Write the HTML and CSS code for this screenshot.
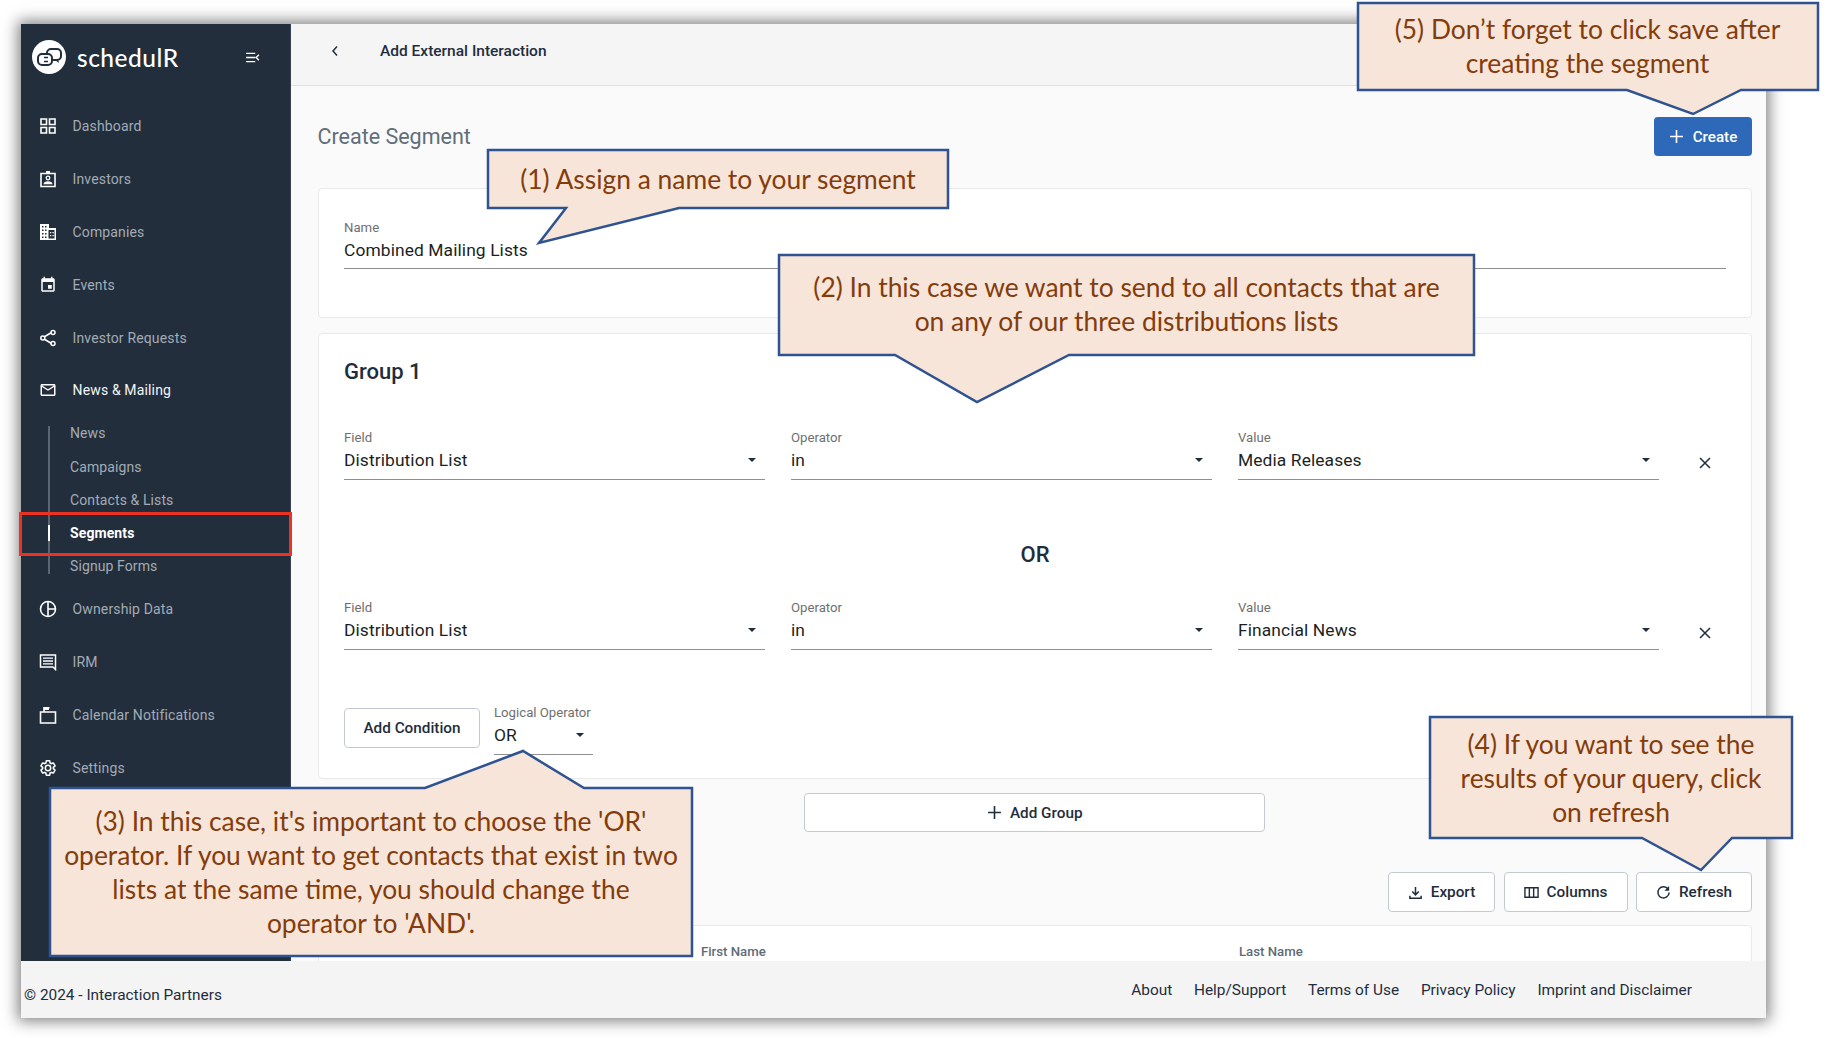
FILE: index.html
```html
<!DOCTYPE html>
<html lang="en">
<head>
<meta charset="utf-8">
<title>Create Segment</title>
<link rel="stylesheet" href="styles.css">
</head>
<body>
<div class="window">
  <div class="upper">
    <aside class="sidebar">
      <div class="brand">
        <svg class="logo" viewBox="0 0 34 34"><circle cx="17" cy="17" r="17" fill="#fff"/><rect x="15" y="9" width="14" height="11" rx="4" fill="none" stroke="#222e3c" stroke-width="2"/><path d="M26 19l1 4-4-3z" fill="#222e3c"/><rect x="6" y="14" width="14" height="11" rx="4" fill="#fff" stroke="#222e3c" stroke-width="2"/><path d="M10 14.500l-1-2 3 2z" fill="#222e3c"/><path d="M12 17.500h4M12 21.500h4" stroke="#222e3c" stroke-width="1.500"/></svg>
        <span class="brand-name">schedulR</span>
        <svg class="collapse" viewBox="0 0 16 12"><path d="M1 1.500h10M1 6h10M1 10.500h10M15 3l-3 3 3 3" fill="none" stroke="#fff" stroke-width="1.500"/></svg>
      </div>
      <nav class="nav">
        <a class="nav-item"><svg class="nav-icon" viewBox="0 0 18 18"><path d="M2 2h5.500v5.500H2zM10.500 2H16v5.500h-5.500zM2 10.500h5.500V16H2zM10.500 10.500H16V16h-5.500z" fill="none" stroke="#fff" stroke-width="1.600"/></svg>Dashboard</a>
        <a class="nav-item"><svg class="nav-icon" viewBox="0 0 18 18"><path d="M2 3.500h14v13H2z" fill="none" stroke="#fff" stroke-width="1.600"/><path d="M7 1h4v3H7z" fill="#fff"/><circle cx="9" cy="8" r="1.800" fill="none" stroke="#fff" stroke-width="1.300"/><path d="M4.500 14.300c0-2 2-3 4.500-3s4.500 1 4.500 3z" fill="#fff"/></svg>Investors</a>
        <a class="nav-item"><svg class="nav-icon" viewBox="0 0 18 18"><path d="M1 1h9v4h7v12H1z" fill="#fff"/><path d="M3 3h1.500v1.500H3zM6 3h1.500v1.500H6zM3 6.500h1.500V8H3zM6 6.500h1.500V8H6zM3 10h1.500v1.500H3zM6 10h1.500v1.500H6zM3 13.500h1.500V15H3zM6 13.500h1.500V15H6zM9.500 7H15.500v8.500H9.500z" fill="#222e3c"/><path d="M11 9h1.300v1.300H11zM13.500 9h1.300v1.300h-1.300zM11 12h1.300v1.300H11zM13.500 12h1.300v1.300h-1.300z" fill="#fff"/></svg>Companies</a>
        <a class="nav-item"><svg class="nav-icon" viewBox="0 0 24 24"><path d="M17 12h-5v5h5v-5zM16 1v2H8V1H6v2H5c-1.110 0-1.990.9-1.990 2L3 19c0 1.100.89 2 2 2h14c1.100 0 2-.9 2-2V5c0-1.100-.9-2-2-2h-1V1h-2zm3 18H5V8h14v11z" fill="#fff"/></svg>Events</a>
        <a class="nav-item"><svg class="nav-icon" viewBox="0 0 18 18"><path d="M5 8l7.500-4.500M5 10l7.500 4.500" stroke="#fff" stroke-width="1.600"/><circle cx="3.800" cy="9" r="2" fill="none" stroke="#fff" stroke-width="1.500"/><circle cx="14" cy="3.500" r="2" fill="none" stroke="#fff" stroke-width="1.500"/><circle cx="14" cy="14.500" r="2" fill="none" stroke="#fff" stroke-width="1.500"/></svg>Investor Requests</a>
        <a class="nav-item nav-open"><svg class="nav-icon" viewBox="0 0 24 24"><path d="M20 4H4c-1.100 0-1.990.9-1.990 2L2 18c0 1.100.9 2 2 2h16c1.100 0 2-.9 2-2V6c0-1.100-.9-2-2-2zm0 14H4V8l8 5 8-5v10zm-8-7L4 6h16l-8 5z" fill="#fff"/></svg>News &amp; Mailing</a>
        <div class="subnav">
          <a class="sub-item">News</a>
          <a class="sub-item">Campaigns</a>
          <a class="sub-item">Contacts &amp; Lists</a>
          <a class="sub-item sub-active">Segments</a>
          <a class="sub-item">Signup Forms</a>
        </div>
        <a class="nav-item"><svg class="nav-icon" viewBox="0 0 18 18"><circle cx="9" cy="9" r="7.500" fill="none" stroke="#fff" stroke-width="1.600"/><path d="M9 1.500v15M9 9h7.500" stroke="#fff" stroke-width="1.600"/></svg>Ownership Data</a>
        <a class="nav-item"><svg class="nav-icon" viewBox="0 0 18 18"><path d="M1.500 2h15v14.500l-2.500-2.500H1.500z" fill="none" stroke="#fff" stroke-width="1.500"/><path d="M4 5.200h10M4 8h10M4 10.800h10" stroke="#fff" stroke-width="1.300"/></svg>IRM</a>
        <a class="nav-item"><svg class="nav-icon" viewBox="0 0 18 18"><path d="M1.500 6h15v11h-15z" fill="none" stroke="#fff" stroke-width="1.600"/><path d="M5 6V1.800h5.500" fill="none" stroke="#fff" stroke-width="1.600"/><path d="M5 1h5v3H5z" fill="#fff"/></svg>Calendar Notifications</a>
        <a class="nav-item"><svg class="nav-icon" viewBox="0 0 24 24"><path d="M19.140 12.940c.04-.3.06-.61.06-.94 0-.32-.02-.64-.07-.94l2.030-1.580c.18-.14.23-.41.12-.61l-1.920-3.320c-.12-.22-.37-.29-.59-.22l-2.390.96c-.5-.38-1.030-.7-1.620-.94l-.36-2.540c-.04-.24-.24-.41-.48-.41h-3.840c-.24 0-.43.17-.47.41l-.36 2.540c-.59.24-1.130.57-1.620.94l-2.390-.96c-.22-.08-.47 0-.59.22L2.740 8.870c-.12.21-.08.47.12.61l2.030 1.580c-.05.3-.09.63-.09.94s.02.64.07.94l-2.030 1.580c-.18.14-.23.41-.12.61l1.920 3.320c.12.22.37.29.59.22l2.390-.96c.5.38 1.030.7 1.620.94l.36 2.540c.05.24.24.41.48.41h3.840c.24 0 .44-.17.47-.41l.36-2.540c.59-.24 1.130-.56 1.620-.94l2.390.96c.22.08.47 0 .59-.22l1.920-3.320c.12-.22.07-.47-.12-.61l-2.010-1.580zM12 15.600c-1.980 0-3.600-1.620-3.600-3.600s1.620-3.600 3.600-3.600 3.600 1.620 3.600 3.600-1.620 3.600-3.600 3.600z" fill="none" stroke="#fff" stroke-width="2"/></svg>Settings</a>
      </nav>
    </aside>
    <div class="content">
      <header class="topbar">
        <svg class="back" viewBox="0 0 8 12"><path d="M6 1.500L2 6l4 4.500" fill="none" stroke="#1f2d3d" stroke-width="1.500"/></svg>
        <span class="topbar-title">Add External Interaction</span>
      </header>
      <main class="main">
        <div class="title-row">
          <h1 class="page-title">Create Segment</h1>
          <button class="btn-primary"><svg class="btn-icon" viewBox="0 0 14 14"><path d="M7 1v12M1 7h12" stroke="#fff" stroke-width="1.500"/></svg>Create</button>
        </div>
        <section class="card card-name">
          <div class="field">
            <span class="field-label">Name</span>
            <div class="field-value">Combined Mailing Lists</div>
          </div>
        </section>
        <section class="card card-group">
          <h2 class="group-title">Group 1</h2>
          <div class="row">
            <div class="field field-grow"><span class="field-label">Field</span><div class="field-value">Distribution List<i class="caret"></i></div></div>
            <div class="field field-grow"><span class="field-label">Operator</span><div class="field-value">in<i class="caret"></i></div></div>
            <div class="field field-grow"><span class="field-label">Value</span><div class="field-value">Media Releases<i class="caret"></i></div></div>
            <svg class="close" viewBox="0 0 12 12"><path d="M1 1l10 10M11 1L1 11" stroke="#1f2d3d" stroke-width="1.500"/></svg>
          </div>
          <div class="or-label">OR</div>
          <div class="row">
            <div class="field field-grow"><span class="field-label">Field</span><div class="field-value">Distribution List<i class="caret"></i></div></div>
            <div class="field field-grow"><span class="field-label">Operator</span><div class="field-value">in<i class="caret"></i></div></div>
            <div class="field field-grow"><span class="field-label">Value</span><div class="field-value">Financial News<i class="caret"></i></div></div>
            <svg class="close" viewBox="0 0 12 12"><path d="M1 1l10 10M11 1L1 11" stroke="#1f2d3d" stroke-width="1.500"/></svg>
          </div>
          <div class="condition-row">
            <button class="btn btn-condition">Add Condition</button>
            <div class="field field-logic"><span class="field-label">Logical Operator</span><div class="field-value">OR<i class="caret"></i></div></div>
          </div>
        </section>
        <button class="btn btn-group"><svg class="btn-icon" viewBox="0 0 14 14"><path d="M7 1v12M1 7h12" stroke="#1f2d3d" stroke-width="1.500"/></svg>Add Group</button>
        <div class="actions">
          <button class="btn btn-export"><svg class="btn-icon" viewBox="0 0 16 16"><path d="M8 2v8M4.500 7L8 10.500 11.500 7M2 11.500V14h12v-2.500" fill="none" stroke="#1f2d3d" stroke-width="1.600"/></svg>Export</button>
          <button class="btn btn-columns"><svg class="btn-icon" viewBox="0 0 16 14"><path d="M1 2h14v10H1zM5.700 2v10M10.300 2v10" fill="none" stroke="#1f2d3d" stroke-width="1.500"/></svg>Columns</button>
          <button class="btn btn-refresh"><svg class="btn-icon" viewBox="0 0 16 16"><path d="M13 4.500A6 6 0 1 0 14 8" fill="none" stroke="#1f2d3d" stroke-width="1.600"/><path d="M14 1v5H9z" fill="#1f2d3d"/></svg>Refresh</button>
        </div>
        <section class="card card-table">
          <span class="col-head col-first">First Name</span>
          <span class="col-head">Last Name</span>
        </section>
      </main>
    </div>
  </div>
  <footer class="footer">
    <span class="copyright">© 2024 - Interaction Partners</span>
    <nav class="footer-links">
      <a>About</a><a>Help/Support</a><a>Terms of Use</a><a>Privacy Policy</a><a>Imprint and Disclaimer</a>
    </nav>
  </footer>
</div>

<div class="highlight"></div>

<svg class="callout-shapes" viewBox="0 0 1828 1038">
  <polygon points="488,150 948,150 948,208 679,208 539,243 566,208 488,208"/>
  <polygon points="779,255 1474,255 1474,355 1069,355 977,402 895,355 779,355"/>
  <polygon points="50,788 425,788 523,751 584,788 692,788 692,956 50,956"/>
  <polygon points="1430,717 1792,717 1792,838 1732,838 1701,870 1642,838 1430,838"/>
  <polygon points="1358,3 1818,3 1818,90 1741,90 1693,114 1627,90 1358,90"/>
</svg>
<div class="callout callout-1">(1) Assign a name to your segment</div>
<div class="callout callout-2">(2) In this case we want to send to all contacts that are<br>on any of our three distributions lists</div>
<div class="callout callout-3">(3) In this case, it's important to choose the 'OR'<br>operator. If you want to get contacts that exist in two<br>lists at the same time, you should change the<br>operator to 'AND'.</div>
<div class="callout callout-4">(4) If you want to see the<br>results of your query, click<br>on refresh</div>
<div class="callout callout-5">(5) Don’t forget to click save after<br>creating the segment</div>
</body>
</html>
```

FILE: styles.css
```css
* { box-sizing: border-box; }
html, body { margin: 0; padding: 0; }
body {
  width: 1828px;
  height: 1038px;
  overflow: hidden;
  background: #fff;
  font-family: Roboto, "Liberation Sans", sans-serif;
  color: #1f2d3d;
  position: relative;
}
.window {
  margin: 24px 0 0 21px;
  width: 1745px;
  height: 994px;
  display: flex;
  flex-direction: column;
  box-shadow: 0 0 14px 3px rgba(0, 0, 0, .5);
  background: #fafafa;
}
.upper { height: 937px; display: flex; }

.sidebar {
  width: 270px;
  flex: none;
  background: #222e3c;
  border-right: 1px solid #34455a;
  color: #a3abb5;
}
.brand {
  height: 75.500px;
  display: flex;
  align-items: center;
  padding: 0 30px 9.500px 11px;
}
.logo { width: 34px; height: 34px; flex: none; }
.brand-name {
  margin-left: 11px;
  font-family: Lato, sans-serif;
  font-size: 24.500px;
  font-weight: 500;
  color: #fff;
  letter-spacing: .5px;
}
.collapse { width: 15px; height: 11px; margin-left: auto; }
.nav { display: flex; flex-direction: column; }
.nav-item {
  height: 52.900px;
  display: flex;
  align-items: center;
  padding-left: 18px;
  font-size: 14px;
  letter-spacing: .15px;
}
.nav-open { color: #f4f5f6; }
.nav-icon { width: 18px; height: 18px; flex: none; margin-right: 15.500px; }
.subnav {
  position: relative;
  display: flex;
  flex-direction: column;
}
.subnav::before {
  content: "";
  position: absolute;
  left: 27px;
  top: 9px;
  bottom: 9px;
  width: 2px;
  background: #5b6672;
}
.sub-item {
  height: 33.200px;
  display: flex;
  align-items: center;
  padding-left: 49px;
  font-size: 14px;
  letter-spacing: .1px;
  position: relative;
}
.sub-active { color: #fff; font-weight: 700; }
.sub-active::before {
  content: "";
  position: absolute;
  left: 27px;
  top: 9px;
  bottom: 9px;
  width: 2px;
  background: #fff;
}

.content { flex: 1; min-width: 0; display: flex; flex-direction: column; }
.topbar {
  height: 62px;
  flex: none;
  background: #f5f5f5;
  border-bottom: 1px solid #e0e0e0;
  display: flex;
  align-items: center;
  padding: 0 0 8px 40px;
}
.back { width: 8px; height: 12px; }
.topbar-title { margin-left: 41px; font-size: 15.500px; font-weight: 500; }
.main {
  flex: 1;
  min-height: 0;
  overflow: hidden;
  padding: 31px 14px 0 26.500px;
  display: flex;
  flex-direction: column;
}
.title-row { display: flex; justify-content: space-between; align-items: center; height: 39px; flex: none; }
.page-title { margin: 0; font-size: 21.500px; font-weight: 400; color: #616d78; }
.btn-primary {
  width: 98px;
  height: 39px;
  border: 0;
  border-radius: 4px;
  background: #2d69b8;
  color: #fff;
  font: 500 15.200px Roboto, sans-serif;
  display: flex;
  align-items: center;
  justify-content: center;
  gap: 9px;
}
.btn-icon { width: 15px; height: 15px; flex: none; }
.card {
  flex: none;
  background: #fff;
  border: 1px solid #e9e9e9;
  border-radius: 4px;
}
.card-name { margin-top: 32px; height: 130px; padding: 32px 25px 0 25.500px; }
.card-name .field-value { height: 34px; padding: 3px 0 6px; }
.card-group { margin-top: 15px; height: 446px; padding: 24px 25px 0 25.500px; }
.group-title { margin: 0 0 45px; font-size: 22px; line-height: 28px; font-weight: 500; }
.field { display: flex; flex-direction: column; }
.field-grow { flex: 1; min-width: 0; }
.field-label { font-size: 13.200px; line-height: 14px; color: #6f6f6f; }
.field-value {
  height: 35px;
  padding: 2px 0 7px;
  font-size: 17.400px;
  line-height: 24px;
  color: #1b1f24;
  border-bottom: 1px solid #8f8f8f;
  display: flex;
  justify-content: space-between;
  align-items: center;
  letter-spacing: .1px;
}
.caret {
  width: 0;
  height: 0;
  margin-right: 9px;
  border-left: 4px solid transparent;
  border-right: 4px solid transparent;
  border-top: 4px solid #1f2d3d;
}
.row { display: flex; gap: 26px; }
.close { width: 12px; height: 12px; flex: none; margin: 26px 15px 0 14px; }
.or-label { margin: 63px 0 34px; line-height: 24px; font-size: 22px; font-weight: 500; text-align: center; }
.condition-row { margin-top: 56px; display: flex; gap: 14px; align-items: flex-start; }
.field-logic { width: 99px; }
.btn {
  height: 40px;
  background: #fff;
  border: 1px solid #c5cad2;
  border-radius: 4px;
  color: #1f2d3d;
  font: 500 15.300px Roboto, sans-serif;
  display: flex;
  align-items: center;
  justify-content: center;
  gap: 8px;
  flex: none;
}
.btn-condition { width: 136px; margin-top: 2px; }
.btn-group { width: 461px; height: 39px; margin-top: 14px; align-self: center; }
.actions { margin-top: 40px; display: flex; justify-content: flex-end; gap: 8.500px; flex: none; }
.btn-export { width: 107px; }
.btn-columns { width: 124px; }
.btn-refresh { width: 116px; }
.card-table { margin-top: 13px; height: 80px; padding: 18px 0 0 382.500px; display: flex; }
.col-head { font-size: 13.200px; line-height: 16px; font-weight: 500; color: #5f6b76; }
.col-first { width: 538px; }

.footer {
  flex: none;
  height: 57px;
  background: #f4f4f4;
  display: flex;
  justify-content: space-between;
  padding: 0 74px 0 3px;
  font-size: 15.400px;
}
.copyright { padding-top: 25px; line-height: 18px; }
.footer-links { display: flex; gap: 21.800px; padding-top: 20px; line-height: 18px; }

.highlight {
  position: absolute;
  left: 19px;
  top: 512px;
  width: 273px;
  height: 44px;
  border: 3px solid #ec3323;
}
.callout-shapes { position: absolute; left: 0; top: 0; width: 1828px; height: 1038px; }
.callout-shapes polygon { fill: #f6e5d8; stroke: #2f5291; stroke-width: 2.500px; stroke-linejoin: miter; }
.callout {
  position: absolute;
  font-family: Lato, sans-serif;
  font-size: 26.400px;
  line-height: 34px;
  color: #843c0c;
  text-align: center;
  white-space: nowrap;
}
.callout-1 { left: 488px; top: 162px; width: 460px; }
.callout-2 { left: 779px; top: 270px; width: 695px; }
.callout-3 { left: 50px; top: 804px; width: 642px; }
.callout-4 { left: 1429px; top: 727px; width: 364px; }
.callout-5 { left: 1357px; top: 12px; width: 461px; }
```
